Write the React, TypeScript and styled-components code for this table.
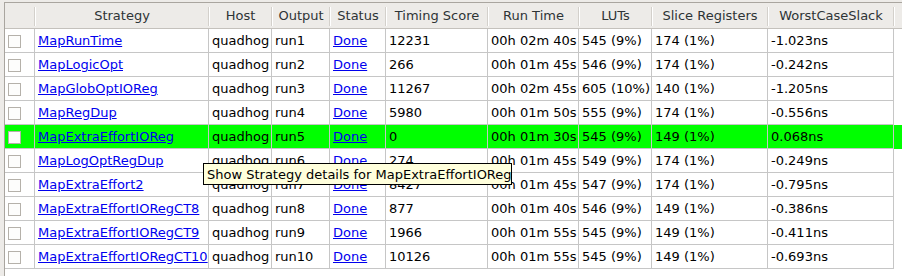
import React from 'react';
import styled, { createGlobalStyle } from 'styled-components';

const GlobalStyle = createGlobalStyle`
    html, body {
        margin: 0;
        padding: 0;
        background: #edebe8;
    }
    body {
        font-family: "DejaVu Sans", "Liberation Sans", sans-serif;
        font-size: 13px;
    }
`;

const COLS = '30px 174px 63px 58px 56px 102px 91px 73px 116px 126px';

type Run = {
    name: string;
    output: string;
    score: string;
    time: string;
    luts: string;
    regs: string;
    slack: string;
    best?: boolean;
};

const runs: Run[] = [
    { name: 'MapRunTime', output: 'run1', score: '12231', time: '00h 02m 40s', luts: '545 (9%)', regs: '174 (1%)', slack: '-1.023ns' },
    { name: 'MapLogicOpt', output: 'run2', score: '266', time: '00h 01m 45s', luts: '546 (9%)', regs: '174 (1%)', slack: '-0.242ns' },
    { name: 'MapGlobOptIOReg', output: 'run3', score: '11267', time: '00h 02m 45s', luts: '605 (10%)', regs: '140 (1%)', slack: '-1.205ns' },
    { name: 'MapRegDup', output: 'run4', score: '5980', time: '00h 01m 50s', luts: '555 (9%)', regs: '174 (1%)', slack: '-0.556ns' },
    { name: 'MapExtraEffortIOReg', output: 'run5', score: '0', time: '00h 01m 30s', luts: '545 (9%)', regs: '149 (1%)', slack: '0.068ns', best: true },
    { name: 'MapLogOptRegDup', output: 'run6', score: '274', time: '00h 01m 45s', luts: '549 (9%)', regs: '174 (1%)', slack: '-0.249ns' },
    { name: 'MapExtraEffort2', output: 'run7', score: '8427', time: '00h 01m 45s', luts: '547 (9%)', regs: '174 (1%)', slack: '-0.795ns' },
    { name: 'MapExtraEffortIORegCT8', output: 'run8', score: '877', time: '00h 01m 40s', luts: '546 (9%)', regs: '149 (1%)', slack: '-0.386ns' },
    { name: 'MapExtraEffortIORegCT9', output: 'run9', score: '1966', time: '00h 01m 55s', luts: '545 (9%)', regs: '149 (1%)', slack: '-0.411ns' },
    { name: 'MapExtraEffortIORegCT10', output: 'run10', score: '10126', time: '00h 01m 55s', luts: '545 (9%)', regs: '149 (1%)', slack: '-0.693ns' },
];

const headers = ['', 'Strategy', 'Host', 'Output', 'Status', 'Timing Score', 'Run Time', 'LUTs', 'Slice Registers', 'WorstCaseSlack'];

const App = () => {
    return (
        <>
            <GlobalStyle />
            <Frame>
                <View>
                    <HeaderRow>
                        {headers.map((h, i) => (
                            <HeaderCell key={i}>{h}</HeaderCell>
                        ))}
                    </HeaderRow>
                    {runs.map((r) => (
                        <Row key={r.output} $best={r.best}>
                            <Cell $center>
                                <Check />
                            </Cell>
                            <Cell><Link>{r.name}</Link></Cell>
                            <Cell>quadhog</Cell>
                            <Cell>{r.output}</Cell>
                            <Cell><Link>Done</Link></Cell>
                            <Cell>{r.score}</Cell>
                            <Cell>{r.time}</Cell>
                            <Cell>{r.luts}</Cell>
                            <Cell>{r.regs}</Cell>
                            <Cell>{r.slack}</Cell>
                        </Row>
                    ))}
                    <Tooltip>Show Strategy details for MapExtraEffortIOReg</Tooltip>
                </View>
            </Frame>
        </>
    );
}

const Frame = styled.div`
    padding: 2px 0 0 4px;
    height: 274px;
    overflow: hidden;
`;

const View = styled.div`
    position: relative;
    height: 100%;
    background: #ffffff;
    border-top: 1px solid #a9a59f;
    border-left: 1px solid #a9a59f;
`;

const HeaderRow = styled.div`
    display: grid;
    grid-template-columns: ${COLS};
    height: 25px;
    background: #edebe8;
    border-bottom: 1px solid #c4c1bc;
`;

const HeaderCell = styled.div`
    position: relative;
    display: flex;
    align-items: center;
    justify-content: center;
    color: #2e3436;
    white-space: nowrap;

    &::after {
        content: '';
        position: absolute;
        right: 0;
        top: 4px;
        bottom: 2px;
        width: 1px;
        background: #d3d0cb;
        box-shadow: 1px 0 0 #ffffff;
    }
`;

const Row = styled.div<{ $best?: boolean }>`
    display: grid;
    grid-template-columns: ${COLS};
    height: 24px;
    background: ${(p) => (p.$best ? '#00ff00' : 'transparent')};
    color: #000000;
`;

const Cell = styled.div<{ $center?: boolean }>`
    display: flex;
    align-items: center;
    justify-content: ${(p) => (p.$center ? 'flex-start' : 'flex-start')};
    padding-left: ${(p) => (p.$center ? '3px' : '3px')};
    border-right: 1px solid #c6c6c6;
    border-bottom: 1px solid #c6c6c6;
    white-space: nowrap;
    overflow: hidden;
`;

const Check = styled.span`
    box-sizing: border-box;
    width: 13px;
    height: 13px;
    margin-top: 1px;
    border: 1px solid #b5b1aa;
    background: #fdfdfc;
`;

const Link = styled.span`
    color: #0000ee;
    text-decoration: underline;
    cursor: pointer;
`;

const Tooltip = styled.div`
    position: absolute;
    left: 198px;
    top: 160px;
    box-sizing: border-box;
    width: 309px;
    height: 22px;
    padding: 0 0 0 3px;
    display: flex;
    align-items: center;
    background: #ffffdc;
    border: 1px solid #000000;
    color: #000000;
    white-space: nowrap;
`;

export default App;
